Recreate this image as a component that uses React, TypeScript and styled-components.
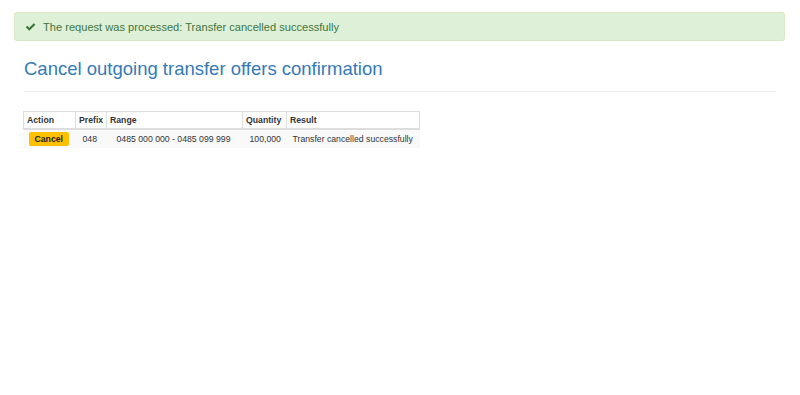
import React from "react";
import styled, { createGlobalStyle } from "styled-components";

const Global = createGlobalStyle`
  html, body { margin: 0; padding: 0; background: #fff; }
  body { font-family: "Liberation Sans", Arial, sans-serif; color: #333; }
`;

const Page = styled.div`
  padding: 12px 15px 0 14px;
  width: 800px;
  box-sizing: border-box;
`;

const Alert = styled.div`
  display: flex;
  align-items: center;
  gap: 7px;
  height: 29px;
  box-sizing: border-box;
  padding: 0 10px;
  background: #dff0d8;
  border: 1px solid #d6e9c6;
  border-radius: 3px;
  color: #3c763d;
  font-size: 11.1px;
`;

const Content = styled.div`
  padding: 0 9px;
`;

const Title = styled.h3`
  margin: 16px 0 0 1px;
  font-weight: 400;
  font-size: 18.5px;
  line-height: 24px;
  color: #337ab7;
  padding-bottom: 10px;
  border-bottom: 1px solid #eee;
`;

const Table = styled.table`
  margin-top: 19px;
  border-collapse: collapse;
  table-layout: fixed;
  font-size: 8.7px;
  width: 396px;
`;

const Th = styled.th<{ w: number }>`
  box-sizing: border-box;
  width: ${(p) => p.w}px;
  text-align: left;
  font-weight: 700;
  padding: 1px 3px 0;
  height: 17px;
  border: 1px solid #ddd;
  border-bottom: 2px solid #ddd;
  color: #333;
  white-space: nowrap;
  overflow: hidden;
`;

const Tr = styled.tr`
  background: #f9f9f9;
`;

const Td = styled.td<{ pl?: number }>`
  padding: 0 0 0 ${(p) => p.pl ?? 3}px;
  height: 18px;
  color: #333;
  white-space: nowrap;
`;

const CancelButton = styled.span`
  display: inline-block;
  background: #ffc000;
  color: #222;
  font-weight: 700;
  border-radius: 2px;
  padding: 0 6px;
  line-height: 14px;
  font-size: 8.7px;
`;

const Check = () => (
  <svg width="11" height="10" viewBox="0 0 12 10">
    <path d="M0.8 5.4 L2.5 3.7 L4.6 5.8 L9.6 0.8 L11.3 2.5 L4.6 9.2 Z" fill="#3c763d" />
  </svg>
);

export default function App() {
  return (
    <>
      <Global />
      <Page>
        <Alert>
          <Check />
          <span>The request was processed: Transfer cancelled successfully</span>
        </Alert>
        <Content>
          <Title>Cancel outgoing transfer offers confirmation</Title>
          <Table>
            <thead>
              <tr>
                <Th w={52}>Action</Th>
                <Th w={31}>Prefix</Th>
                <Th w={136}>Range</Th>
                <Th w={44}>Quantity</Th>
                <Th w={133}>Result</Th>
              </tr>
            </thead>
            <tbody>
              <Tr>
                <Td pl={5}><CancelButton>Cancel</CancelButton></Td>
                <Td pl={7}>048</Td>
                <Td pl={10}>0485 000 000 - 0485 099 999</Td>
                <Td pl={7}>100,000</Td>
                <Td pl={6}>Transfer cancelled successfully</Td>
              </Tr>
            </tbody>
          </Table>
        </Content>
      </Page>
    </>
  );
}
